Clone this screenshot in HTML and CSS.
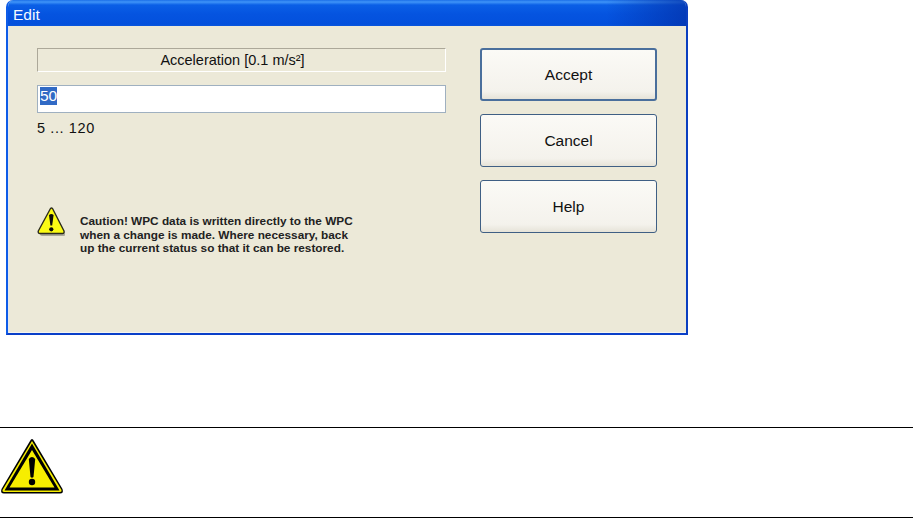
FILE: index.html
```html
<!DOCTYPE html>
<html lang="en">
<head>
<meta charset="utf-8">
<title>Edit</title>
<link rel="stylesheet" href="styles.css">
</head>
<body>
<div class="window">
  <div class="titlebar">Edit</div>
  <div class="content">
    <div class="left">
      <div class="label">Acceleration [0.1 m/s²]</div>
      <div class="input"><span class="sel">50</span></div>
      <div class="range">5 ... 120</div>
      <div class="caution">
        <svg class="caution-icon" width="30" height="30" viewBox="0 0 30 30">
          <path d="M15 4 L28 27 Q28.500 29 27 29 L5 29 Q3 29 3 27 Z" fill="#77756a" opacity=".55"/>
          <path d="M13.500 1.500 Q14.500 .5 15.500 1.500 L27 24 Q27.500 26.500 25.500 26.500 L3 26.500 Q.8 26.500 1.300 24 Z" fill="#fbfb14" stroke="#2c2c1c" stroke-width="1.400" stroke-linejoin="round"/>
          <path d="M12 8 Q14.300 6 16.600 8 L15.200 18.500 L13.400 18.500 Z" fill="#0c0c0c"/>
          <circle cx="14.300" cy="22.300" r="2.100" fill="#0c0c0c"/>
        </svg>
        <p class="caution-text">Caution! WPC data is written directly to the WPC<br>when a change is made. Where necessary, back<br>up the current status so that it can be restored.</p>
      </div>
    </div>
    <div class="buttons">
      <div class="btn btn-default">Accept</div>
      <div class="btn">Cancel</div>
      <div class="btn">Help</div>
    </div>
  </div>
</div>
<div class="notice">
  <svg class="notice-icon" width="64" height="58" viewBox="0 0 64 58">
    <path d="M32 1 Q33 1 34 3 L62.500 51 Q64 55.500 60 55.500 L4 55.500 Q0 55.500 1.500 51 L30 3 Q31 1 32 1 Z" fill="#000"/>
    <path d="M32 3 L61.500 52 Q62 54 60 54 L4 54 Q2 54 2.500 52 Z" fill="#f7ee00"/>
    <path d="M32 5.500 L59.500 52.500 L4.500 52.500 Z" fill="#000"/>
    <path d="M32 12 L54.500 49.500 L9.500 49.500 Z" fill="#f7ee00"/>
    <path d="M28.800 21 Q32 17 35.200 21 L33.500 39 Q32 40.500 30.500 39 Z" fill="#000"/>
    <circle cx="32" cy="44" r="3.200" fill="#000"/>
  </svg>
</div>
</body>
</html>
```
FILE: styles.css
```css
html, body {
  margin: 0;
  padding: 0;
  background: #fff;
}
body {
  width: 913px;
  height: 518px;
  overflow: hidden;
  font-family: "Liberation Sans", Arial, sans-serif;
}
.window {
  margin-left: 6px;
  width: 682px;
  height: 335px;
  box-sizing: border-box;
  display: flex;
  flex-direction: column;
  background: #ece9d8;
  border-style: solid;
  border-color: #0a50e0 #0b3fc0 #0a3fc8 #0e5ce8;
  border-width: 0 2px 2px 2px;
  border-radius: 7px 7px 0 0;
  overflow: hidden;
  box-shadow: inset 1px 0 0 #e6e8ee, inset 0 -1px 0 #f4f4f0;
}
.titlebar {
  height: 26px;
  flex: none;
  box-sizing: border-box;
  padding: 6px 0 0 7px;
  margin: 0 -2px;
  color: #f4f8ff;
  font-size: 15.500px;
  line-height: 17px;
  background:
    linear-gradient(to right, rgba(3, 60, 190, 0) 88%, rgba(3, 50, 170, .75) 100%),
    linear-gradient(to bottom, #1c6fe8 0, #3f94f8 2px, #0a5fe6 5px, #0554e0 14px, #0350dc 24px, #0a56dc 26px);
}
.content {
  flex: 1;
  display: flex;
  padding: 22px 0 0 29px;
  gap: 34px;
}
.left {
  width: 409px;
  flex: none;
}
.label {
  height: 24px;
  box-sizing: border-box;
  border: 1px solid;
  border-color: #aca899 #fff #fff #aca899;
  padding-right: 18px;
  text-align: center;
  font-size: 14.500px;
  line-height: 22px;
  color: #111;
}
.input {
  margin-top: 13px;
  height: 28px;
  box-sizing: border-box;
  border: 1px solid #9fb0c0;
  background: #fff;
  padding: 1px 2px;
  font-size: 15.500px;
  line-height: 18px;
}
.sel {
  display: inline-block;
  background: #316ac5;
  color: #fff;
}
.range {
  margin-top: 8px;
  font-size: 14.500px;
  line-height: 15px;
  letter-spacing: .6px;
  color: #111;
}
.caution {
  margin-top: 71px;
  display: flex;
  align-items: flex-start;
}
.caution-icon {
  flex: none;
}
.caution-text {
  margin: 8px 0 0 13px;
  font-size: 11.800px;
  font-weight: bold;
  line-height: 13.500px;
  color: #222;
  white-space: nowrap;
}
.buttons {
  display: flex;
  flex-direction: column;
  gap: 13px;
}
.btn {
  width: 177px;
  height: 53px;
  box-sizing: border-box;
  border: 1px solid #3f5f84;
  border-radius: 3px;
  background: linear-gradient(to bottom, #fbfaf6, #f4f2ec 85%, #e6e3d8);
  display: flex;
  align-items: center;
  justify-content: center;
  font-size: 15.500px;
  color: #111;
}
.btn-default {
  border: 2px solid #4a6f9c;
}
.notice {
  margin-top: 92px;
  height: 79px;
  border-top: 1px solid #000;
  border-bottom: 1px solid #000;
  padding-top: 10px;
}
.notice-icon {
  display: block;
}
```
